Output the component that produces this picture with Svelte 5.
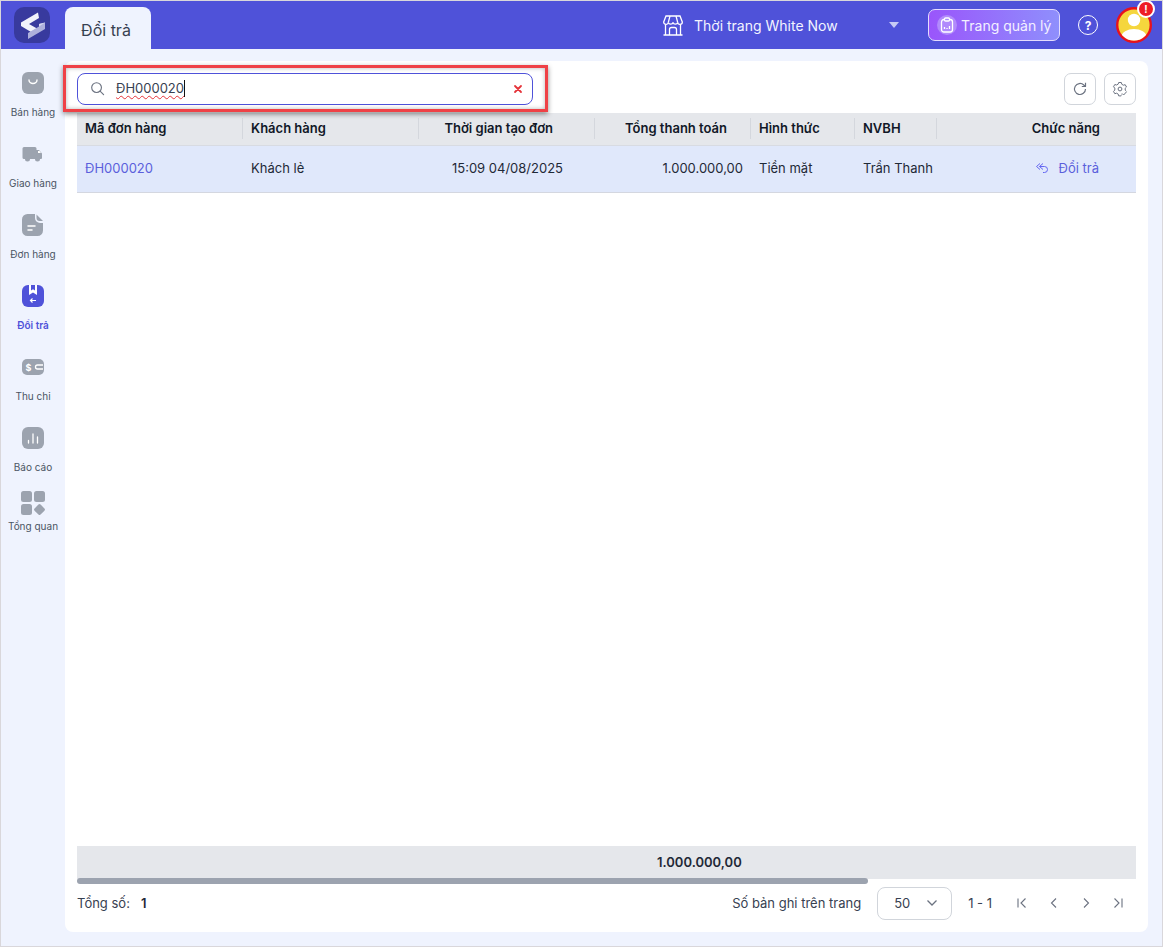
<script>
  const nav = [
    { label: 'Bán hàng', icon: 'bag' },
    { label: 'Giao hàng', icon: 'truck' },
    { label: 'Đơn hàng', icon: 'doc' },
    { label: 'Đổi trả', icon: 'ret', active: true },
    { label: 'Thu chi', icon: 'cash' },
    { label: 'Báo cáo', icon: 'chart' }
  ];
  const cols = [
    { t: 'Mã đơn hàng', c: 'c1' },
    { t: 'Khách hàng', c: 'c2' },
    { t: 'Thời gian tạo đơn', c: 'c3' },
    { t: 'Tổng thanh toán', c: 'c4' },
    { t: 'Hình thức', c: 'c5' },
    { t: 'NVBH', c: 'c6' },
    { t: 'Chức năng', c: 'c7' }
  ];
</script>

<div class="frame">
  <header class="top">
    <div class="logo">
      <svg width="36" height="36" viewBox="0 0 36 36">
        <path d="M24 5.500 L7 15.500 V19 L17 25 L23 21.500 L15 17 L25 11 Z" fill="#f1f2fb"/>
        <path d="M31 15.500 V22 L14 32 V26 L25 19.500 V17 Z" fill="#aeb0dc"/>
        <path d="M25 17 L31 15.500 L25 19.500 Z" fill="#d6d7f0"/>
      </svg>
    </div>
    <div class="tab">Đổi trả</div>
    <div class="spacer"></div>
    <svg class="store" width="20" height="21" viewBox="0 0 20 21" fill="none" stroke="#fff" stroke-width="1.300">
      <path d="M3 1h14l2.300 6a2.300 2.300 0 0 1-4.600.3 2.400 2.400 0 0 1-4.700 0 2.400 2.400 0 0 1-4.700 0 2.300 2.300 0 0 1-4.600-.3z"/>
      <path d="M2.500 10v10h15V10M6.500 20v-5.500a2 2 0 0 1 2-2h3a2 2 0 0 1 2 2V20M0.500 20h19M7 1L5.300 7.300M13 1l1.700 6.300"/>
    </svg>
    <div class="shop">Thời trang White Now</div>
    <div class="caret"></div>
    <div class="manage">
      <span class="clip">
        <svg width="14" height="16" viewBox="0 0 14 16" fill="none" stroke="#fff" stroke-width="1.300">
          <rect x="1.500" y="2.500" width="11" height="12.500" rx="2.500"/>
          <rect x="4.500" y="1" width="5" height="3" rx="1" fill="#a78bfa"/>
          <path d="M4.500 12v-2M7 12v-1M9.500 12V9"/>
        </svg>
      </span>
      Trang quản lý
    </div>
    <div class="help">?</div>
    <div class="avatar">
      <svg width="36" height="36" viewBox="0 0 36 36">
        <circle cx="18" cy="18" r="16.800" fill="#f5d63d" stroke="#e8121c" stroke-width="2.400"/>
        <clipPath id="av"><circle cx="18" cy="18" r="15.600"/></clipPath>
        <g clip-path="url(#av)" fill="#fff">
          <circle cx="18" cy="13" r="6.200"/>
          <ellipse cx="18" cy="30" rx="12.500" ry="8"/>
        </g>
      </svg>
      <span class="badge">!</span>
    </div>
  </header>

  <div class="body">
    <nav class="side">
      {#each nav as n}
        <div class="item" class:active={n.active}>
          <span class="ic">
            <svg width="22" height="22" viewBox="0 0 22 22">
              {#if n.icon === 'bag'}
                <rect width="22" height="22" rx="6" fill="#9ca3af"/>
                <path d="M7 8a4 3.500 0 0 0 8 0" fill="none" stroke="#fff" stroke-width="1.400" stroke-linecap="round"/>
              {:else if n.icon === 'truck'}
                <path d="M2 4h11a1.500 1.500 0 0 1 1.500 1.500V7h2.500l3 3.500V15a1 1 0 0 1-1 1h-1a2.500 2.500 0 0 1-5 0H8a2.500 2.500 0 0 1-5 0H2a1.500 1.500 0 0 1-1.500-1.500v-9A1.500 1.500 0 0 1 2 4z" fill="#9ca3af"/>
                <path d="M16 8h1.500l1.500 2h-3z" fill="#fff"/>
              {:else if n.icon === 'doc'}
                <path d="M5.500 0H13v4a5 5 0 0 0 5 5h3v7.500a5.500 5.500 0 0 1-5.500 5.500h-10A5.500 5.500 0 0 1 0 16.500v-11A5.500 5.500 0 0 1 5.500 0z" fill="#9ca3af"/>
                <path d="M14.500 0.500L21 7h-3.500a3 3 0 0 1-3-3z" fill="#9ca3af"/>
                <path d="M6 12h7M6 16h4" stroke="#fff" stroke-width="1.500" stroke-linecap="round"/>
              {:else if n.icon === 'ret'}
                <rect width="22" height="22" rx="6" fill="#4f52d9"/>
                <path d="M7 0h8v10l-4-2.500-4 2.500z" fill="#fff"/>
                <path d="M9 0h4v5.500l-2-1.300-2 1.300z" fill="#4f52d9"/>
                <path d="M14 15.500H9M10.500 13.500l-2 2 2 2" fill="none" stroke="#fff" stroke-width="1.200"/>
              {:else if n.icon === 'cash'}
                <rect y="3" width="22" height="16" rx="5" fill="#9ca3af"/>
                <text x="6.500" y="14.500" text-anchor="middle" font-size="9" font-weight="700" fill="#fff" font-family="Inter, sans-serif">$</text>
                <path d="M21 9h-5.500a2 2 0 0 0 0 4H21" fill="none" stroke="#fff" stroke-width="1.300"/>
              {:else}
                <rect width="22" height="22" rx="6" fill="#9ca3af"/>
                <path d="M6.500 16v-2.500M11 16V7M15.500 16v-6" stroke="#fff" stroke-width="1.300" stroke-linecap="round"/>
              {/if}
            </svg>
          </span>
          <span class="lb">{n.label}</span>
        </div>
      {/each}
      <div class="item last">
        <span class="ic">
          <svg width="24" height="24" viewBox="0 0 24 24" fill="#9ca3af">
            <rect width="11" height="11" rx="2.500"/>
            <rect x="13" width="11" height="11" rx="2.500"/>
            <rect y="13" width="11" height="11" rx="2.500"/>
            <rect x="14.300" y="14.300" width="8.500" height="8.500" rx="1.500" transform="rotate(45 18.500 18.500)"/>
          </svg>
        </span>
        <span class="lb">Tổng quan</span>
      </div>
    </nav>

    <main class="card">
      <div class="toolbar">
        <div class="search">
          <svg width="15" height="15" viewBox="0 0 16 16" fill="none" stroke="#6b7280" stroke-width="1.200">
            <circle cx="7" cy="7" r="5.200"/><path d="M11 11l3.500 3.500" stroke-linecap="round"/>
          </svg>
          <span class="q">ĐH000020</span><span class="cursor"></span>
          <span class="grow"></span>
          <svg width="10" height="10" viewBox="0 0 10 10" stroke="#e5343a" stroke-width="1.800" stroke-linecap="round">
            <path d="M2 2l6 6M8 2l-6 6"/>
          </svg>
        </div>
        <div class="btns">
          <button class="ib" aria-label="Tải lại">
            <svg width="16" height="16" viewBox="0 0 16 16" fill="none" stroke="#6b7280" stroke-width="1.200">
              <path d="M13.500 8a5.500 5.500 0 1 1-1.700-4L13.500 5.500M13.500 1.800v3.700H9.800" stroke-linejoin="round"/>
            </svg>
          </button>
          <button class="ib" aria-label="Cài đặt">
            <svg width="16" height="16" viewBox="0 0 16 16" fill="none" stroke="#6b7280" stroke-width="1">
              <path d="M6.700 1.500h2.600l.5 1.800 1.600.9 1.800-.5 1.300 2.300-1.300 1.300v1.800l1.300 1.300-1.300 2.300-1.800-.5-1.600.9-.5 1.800H6.700l-.5-1.800-1.600-.9-1.800.5-1.300-2.300 1.300-1.300V7.100L1.500 5.800l1.300-2.300 1.800.5 1.600-.9z" stroke-linejoin="round"/>
              <circle cx="8" cy="8" r="1.900"/>
              <rect x="9.500" y="10.500" width="6.500" height="5.500" fill="#fff" stroke="none"/>
              <path d="M10.300 12.700l1.300 1.300 2.600-2.800" stroke-linecap="round"/>
            </svg>
          </button>
        </div>
      </div>

      <div class="table">
        <div class="thead grid">
          {#each cols as c}
            <div class="th {c.c}">{c.t}</div>
          {/each}
        </div>
        <div class="row grid">
          <div class="td c1 link">ĐH000020</div>
          <div class="td c2">Khách lẻ</div>
          <div class="td c3">15:09 04/08/2025</div>
          <div class="td c4">1.000.000,00</div>
          <div class="td c5">Tiền mặt</div>
          <div class="td c6">Trần Thanh</div>
          <div class="td c7 link">
            <svg width="14" height="14" viewBox="0 0 14 14" fill="none" stroke="#6366f1" stroke-width="1">
              <path d="M5 2.500L1.500 5.500 5 8.500M8 2.500L4.500 5.500 8 8.500M4.500 5.500H9.500a3 3 0 0 1 0 6H8" stroke-linejoin="round"/>
            </svg>
            <span>Đổi trả</span>
          </div>
        </div>
      </div>

      <div class="sum">
        <div class="total">1.000.000,00</div>
        <div class="scroll"><div class="thumb"></div></div>
      </div>

      <div class="pager">
        <span>Tổng số:</span><b>1</b>
        <span class="grow"></span>
        <span>Số bản ghi trên trang</span>
        <div class="select">
          <span>50</span>
          <svg width="12" height="8" viewBox="0 0 12 8" fill="none" stroke="#6b7280" stroke-width="1.300"><path d="M1.500 1.500L6 6l4.500-4.500"/></svg>
        </div>
        <span class="range">1 - 1</span>
        <div class="pg">
          <svg width="12" height="12" viewBox="0 0 12 12" fill="none" stroke="#6b7280" stroke-width="1.100"><path d="M2 1.500v9M9.500 1.500L5 6l4.500 4.500"/></svg>
          <svg width="12" height="12" viewBox="0 0 12 12" fill="none" stroke="#6b7280" stroke-width="1.100"><path d="M8 1.500L3.500 6 8 10.500"/></svg>
          <svg width="12" height="12" viewBox="0 0 12 12" fill="none" stroke="#6b7280" stroke-width="1.100"><path d="M4 1.500L8.500 6 4 10.500"/></svg>
          <svg width="12" height="12" viewBox="0 0 12 12" fill="none" stroke="#6b7280" stroke-width="1.100"><path d="M10 1.500v9M2.500 1.500L7 6l-4.500 4.500"/></svg>
        </div>
      </div>
    </main>
  </div>
  <div class="annot"></div>
</div>

<style>
  :global(body) { margin: 0; }
  .frame {
    position: relative;
    box-sizing: border-box;
    width: 1163px;
    height: 947px;
    border: 1px solid #d9d7db;
    background: #eff3fe;
    font-family: Inter, "Noto Sans", sans-serif;
    color: #1f2937;
    font-size: 13px;
    overflow: hidden;
  }
  .top {
    height: 48px;
    background: #4f52d9;
    display: flex;
    align-items: center;
    color: #fff;
  }
  .logo {
    width: 36px;
    height: 36px;
    margin-left: 13px;
    background: #383a9e;
    border-radius: 10px;
    flex: none;
  }
  .logo svg { display: block; }
  .tab {
    margin-left: 15px;
    margin-top: 6px;
    align-self: stretch;
    width: 86px;
    background: #eff3fe;
    color: #374151;
    border-radius: 8px 8px 0 0;
    font-size: 16px;
    display: flex;
    align-items: center;
    justify-content: center;
    box-sizing: border-box;
    padding: 4px 4px 0 0;
  }
  .spacer { flex: 1; }
  .store { flex: none; }
  .shop { font-size: 14px; margin-left: 11px; width: 149px; white-space: nowrap; color: #f3f4ff; }
  .caret {
    width: 0; height: 0;
    border-left: 5px solid transparent;
    border-right: 5px solid transparent;
    border-top: 6px solid #c7caf5;
    margin-left: 46px;
  }
  .manage {
    margin-left: 29px;
    width: 132px;
    height: 32px;
    box-sizing: border-box;
    border: 1px solid #e4dcff;
    border-radius: 7px;
    background: linear-gradient(90deg, #9a55fb, #8f8ffc);
    display: flex;
    align-items: center;
    gap: 4px;
    padding-left: 8px;
    font-size: 14px;
    color: #f3f0ff;
    white-space: nowrap;
  }
  .clip {
    width: 20px; height: 20px; border-radius: 50%;
    background: #b18afc;
    display: flex; align-items: center; justify-content: center;
    flex: none;
  }
  .help {
    margin-left: 18px;
    width: 20px; height: 20px;
    box-sizing: border-box;
    border: 1.500px solid #fff;
    border-radius: 50%;
    display: flex; align-items: center; justify-content: center;
    font-size: 12px; font-weight: 700;
    flex: none;
  }
  .avatar { position: relative; margin-left: 18px; margin-right: 10px; width: 36px; height: 36px; flex: none; }
  .avatar svg { display: block; }
  .badge {
    position: absolute; top: -7px; left: 21px;
    width: 18px; height: 18px; box-sizing: border-box;
    border: 2px solid #fff;
    border-radius: 50%;
    background: #ee1c25;
    color: #fff;
    font-size: 10px; font-weight: 700;
    display: flex; align-items: center; justify-content: center;
  }
  .body { display: flex; height: 897px; }
  .side { width: 64px; flex: none; display: flex; flex-direction: column; align-items: center; padding-top: 23px; box-sizing: border-box; }
  .item { height: 71px; display: flex; flex-direction: column; align-items: center; flex: none; width: 64px; }
  .item.last { height: 50px; margin-top: -7px; }
  .ic { display: block; height: 22px; }
  .item.last .ic { height: 24px; }
  .ic svg { display: block; }
  .lb { font-size: 10px; margin-top: 12px; color: #4b5563; white-space: nowrap; line-height: 12px; }
  .item.last .lb { margin-top: 5px; }
  .item.active .lb { color: #4f52d9; font-weight: 600; }
  .card {
    margin-top: 12px;
    width: 1083px;
    height: 871px;
    background: #fff;
    border-radius: 8px;
    padding: 12px 12px 0;
    box-sizing: border-box;
    display: flex;
    flex-direction: column;
  }
  .toolbar { display: flex; justify-content: space-between; height: 32px; margin-bottom: 8px; }
  .search {
    width: 456px;
    box-sizing: border-box;
    border: 1px solid #4f52d9;
    border-radius: 8px;
    display: flex;
    align-items: center;
    padding: 0 9px 2px 12px;
    font-size: 13px;
    color: #374151;
  }
  .search > svg:last-child { margin-top: 2px; }
  .q {
    margin-left: 11px;
    text-decoration: underline wavy #e5343a 1px;
    text-underline-offset: 2px;
  }
  .cursor { width: 1px; height: 17px; background: #111; }
  .grow { flex: 1; }
  .btns { display: flex; gap: 8px; }
  .ib {
    width: 32px; height: 32px; padding: 0;
    background: #fff;
    border: 1px solid #d1d5db;
    border-radius: 7px;
    display: flex; align-items: center; justify-content: center;
  }
  .table { flex: 1; }
  .grid { display: grid; grid-template-columns: 166px 176px 176px 156px 104px 82px 199px; }
  .thead { height: 33px; background: #e5e7eb; border-bottom: 1px solid #d8dbe2; box-sizing: border-box; }
  .th {
    font-size: 13px; font-weight: 600; color: #111827;
    display: flex; align-items: center;
    padding: 0 8px 2px;
    position: relative;
  }
  .th:not(:last-child)::after {
    content: ''; position: absolute; right: 0; top: 5px; bottom: 6px; width: 1px; background: #d4d7dd;
  }
  .row { height: 47px; background: #e0e8fb; border-bottom: 1px solid #d4d7e0; box-sizing: border-box; }
  .td { display: flex; align-items: center; padding: 0 8px 2px; font-size: 13px; color: #1f2937; white-space: nowrap; }
  .link { color: #5b5fdc; }
  .th.c3 { justify-content: flex-end; padding-right: 42px; }
  .td.c3 { justify-content: flex-end; padding-right: 32px; }
  .th.c4 { justify-content: flex-end; padding-right: 24px; }
  .td.c4 { justify-content: flex-end; padding-right: 8px; }
  .th.c7 { justify-content: flex-end; padding-right: 36px; }
  .td.c7 { justify-content: flex-end; padding-right: 37px; gap: 10px; }
  .sum { height: 38px; }
  .total {
    height: 32px;
    background: #e5e7eb;
    display: flex; align-items: center;
    font-weight: 600; color: #1f2937; font-size: 13px;
    padding-left: 580px;
  }
  .scroll { height: 6px; background: #fff; border-top: 1px solid #e5e7eb; box-sizing: border-box; }
  .thumb { width: 791px; height: 6px; background: #9ca3af; border-radius: 3px; margin-top: -1px; }
  .pager {
    height: 38px;
    display: flex;
    align-items: center;
    font-size: 13px;
    color: #374151;
    margin-bottom: 10px;
  }
  .pager b { margin-left: 11px; font-weight: 600; color: #1f2937; }
  .select {
    margin-left: 16px;
    width: 75px; height: 33px;
    box-sizing: border-box;
    border: 1px solid #d1d5db;
    border-radius: 8px;
    display: flex; align-items: center; justify-content: space-between;
    padding: 0 13px 0 16px;
    font-size: 13px;
  }
  .range { margin-left: 16px; }
  .pg { display: flex; gap: 20px; margin-left: 24px; margin-right: 12px; }
  .pg svg { display: block; }
  .annot {
    position: absolute;
    left: 62px; top: 64px;
    width: 485px; height: 47px;
    box-sizing: border-box;
    border: 3px solid #ef4146;
    box-shadow: 0 2px 5px rgba(0,0,0,.45), inset 0 0 4px rgba(0,0,0,.3);
  }
</style>
